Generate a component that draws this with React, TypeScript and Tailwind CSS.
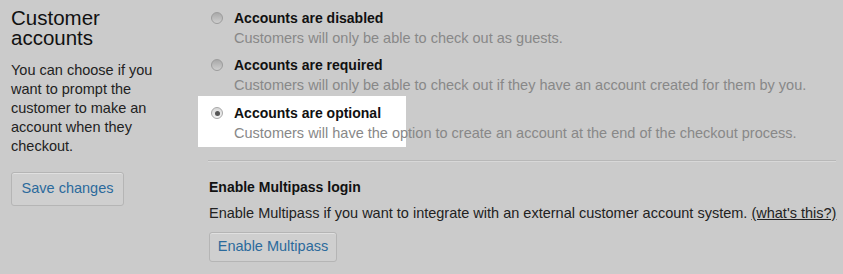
export default function App() {
  return (
    <div className="flex w-[843px] h-[274px] bg-[#cbcbcb] font-['Liberation_Sans',Arial,sans-serif] overflow-hidden">
      <div className="w-[198px] shrink-0 pl-[11px] pt-[8px]">
        <h2 className="w-[150px] text-[20.5px] leading-[20px] text-[#111]">Customer accounts</h2>
        <p className="mt-[13px] w-[155px] text-[14.5px] leading-[19px] text-[#222]">
          You can choose if you want to prompt the customer to make an account when they checkout.
        </p>
        <button className="mt-[16px] w-[113px] h-[34px] rounded-[3px] border border-[#b5b5b5] bg-[#cfcfcf] text-[14.5px] text-[#2b6a9c] shadow-[inset_0_1px_0_rgba(255,255,255,0.35)]">
          Save changes
        </button>
      </div>

      <div className="flex-1 pt-[8px]">
        <RadioOption title="Accounts are disabled" desc="Customers will only be able to check out as guests." />
        <RadioOption title="Accounts are required" desc="Customers will only be able to check out if they have an account created for them by you." className="mt-[7px]" />
        <RadioOption title="Accounts are optional" desc="Customers will have the option to create an account at the end of the checkout process." className="mt-[8px]" checked highlight />

        <div className="mt-[17px] ml-[10px] mr-[7px] h-px bg-[#b8b8b8] shadow-[0_1px_0_#d8d8d8]" />

        <div className="pl-[11px] pt-[16px]">
          <h3 className="text-[14px] leading-[20px] font-bold text-[#111]">Enable Multipass login</h3>
          <p className="mt-[6px] whitespace-nowrap text-[14.5px] leading-[20px] text-[#222]">
            Enable Multipass if you want to integrate with an external customer account system.{' '}
            <a className="underline text-[#222]">(what's this?)</a>
          </p>
          <button className="mt-[9px] w-[128px] h-[30px] rounded-[3px] border border-[#b5b5b5] bg-[#cfcfcf] text-[14.5px] text-[#2b6a9c] shadow-[inset_0_1px_0_rgba(255,255,255,0.35)]">
            Enable Multipass
          </button>
        </div>
      </div>
    </div>
  )
}

function RadioOption({
  title,
  desc,
  checked,
  highlight,
  className = '',
}: {
  title: string
  desc: string
  checked?: boolean
  highlight?: boolean
  className?: string
}) {
  return (
    <div className={`relative flex ${className}`}>
      {highlight && <span className="absolute left-0 top-[-7px] w-[208px] h-[51px] bg-white" />}
      <div className="relative w-[36px] shrink-0 flex justify-center pt-[4px] pl-[2px]">
        <span
          className={`w-[12px] h-[12px] rounded-full border flex items-center justify-center ${
            checked
              ? 'border-[#a8a8a8] bg-gradient-to-b from-[#d8d8d8] to-[#f4f4f4]'
              : 'border-[#9c9c9c] bg-gradient-to-b from-[#a9a9a9] to-[#cfcfcf]'
          }`}
        >
          {checked && <span className="w-[5px] h-[5px] rounded-full bg-[#555]" />}
        </span>
      </div>
      <div className="relative">
        <div className="text-[14px] leading-[20px] font-bold text-[#111]">{title}</div>
        <div className="text-[14.5px] leading-[20px] text-[#888]">{desc}</div>
      </div>
    </div>
  )
}
